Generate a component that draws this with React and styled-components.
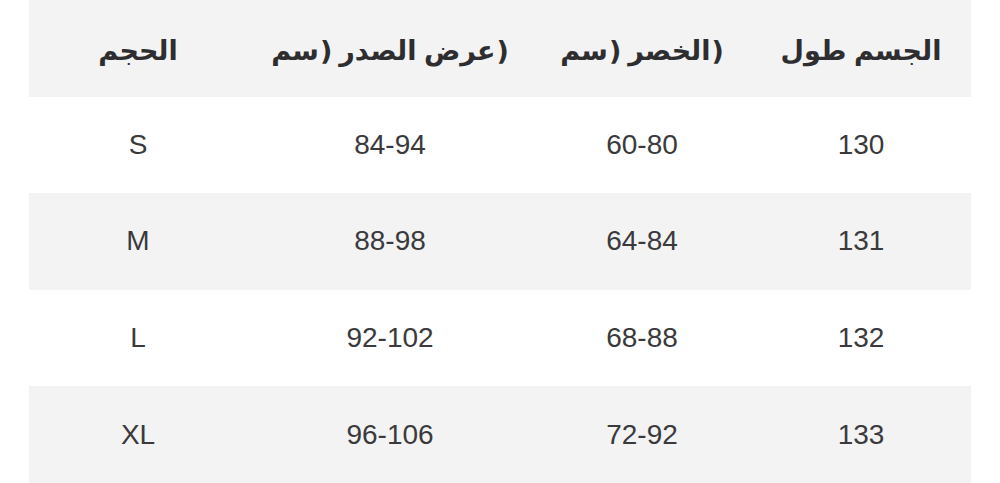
import React from "react";
import styled, { createGlobalStyle } from "styled-components";

const Global = createGlobalStyle`
  html, body { margin: 0; padding: 0; background: #ffffff; }
  body { font-family: "Liberation Sans", "DejaVu Sans", sans-serif; }
`;

const Page = styled.div`
  width: 1000px;
  height: 483px;
  padding: 0 29px;
  box-sizing: border-box;
  display: flex;
  flex-direction: column;
  overflow: hidden;
`;

const Row = styled.div`
  flex: 1;
  display: grid;
  grid-template-columns: 218px 286px 218px 220px;
  align-items: center;
  background: ${(p) => (p.$shaded ? "#f3f3f4" : "#ffffff")};
`;

const Cell = styled.div`
  text-align: center;
  color: #3a3a3c;
  font-size: 28px;
  line-height: 1;
  font-family: "Liberation Sans", "DejaVu Sans", sans-serif;
`;

const HeadCell = styled(Cell)`
  display: flex;
  justify-content: center;
  align-items: baseline;
  direction: ltr;
  font-weight: bold;
  font-size: 27px;
  color: #2e2e30;
  padding-top: 6px;
`;

const Part = styled.bdi`
  white-space: pre;
`;

const Paren = styled.span`
  direction: ltr;
  unicode-bidi: isolate;
  font-family: "DejaVu Sans", sans-serif;
  font-weight: bold;
  margin-left: 1px;
  margin-right: ${(p) => (p.$gap ? "7px" : "0")};
`;

function Header({ word, unit }) {
  if (!unit) {
    return (
      <HeadCell>
        <Part dir="rtl">{word}</Part>
      </HeadCell>
    );
  }
  return (
    <HeadCell>
      <Part dir="rtl">{unit}</Part>
      <Paren $gap>)</Paren>
      <Part dir="rtl">{word}</Part>
      <Paren>)</Paren>
    </HeadCell>
  );
}

const headers = [
  { word: "الحجم" },
  { word: "عرض الصدر", unit: "سم" },
  { word: "الخصر", unit: "سم" },
  { word: "الجسم طول" },
];

const rows = [
  ["S", "84-94", "60-80", "130"],
  ["M", "88-98", "64-84", "131"],
  ["L", "92-102", "68-88", "132"],
  ["XL", "96-106", "72-92", "133"],
];

export default function App() {
  return (
    <>
      <Global />
      <Page>
        <Row $shaded>
          {headers.map((h, i) => (
            <Header key={i} word={h.word} unit={h.unit} />
          ))}
        </Row>
        {rows.map((r, i) => (
          <Row key={i} $shaded={i % 2 === 1}>
            {r.map((c, j) => (
              <Cell key={j}>{c}</Cell>
            ))}
          </Row>
        ))}
      </Page>
    </>
  );
}
